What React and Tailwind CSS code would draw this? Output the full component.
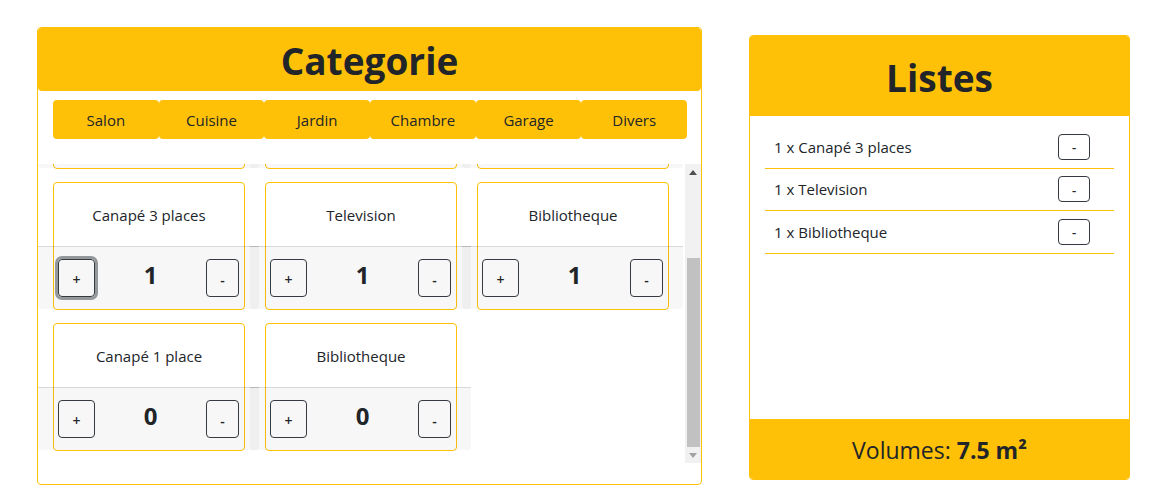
import React, { useLayoutEffect, useRef } from "react";

const rows = [
  [
    { name: "Table basse", qty: 0 },
    { name: "Fauteuil", qty: 0 },
    { name: "Meuble TV", qty: 0 },
  ],
  [
    { name: "Canapé 3 places", qty: 1, focus: true },
    { name: "Television", qty: 1 },
    { name: "Bibliotheque", qty: 1 },
  ],
  [
    { name: "Canapé 1 place", qty: 0 },
    { name: "Bibliotheque", qty: 0 },
  ],
];

const tabs = ["Salon", "Cuisine", "Jardin", "Chambre", "Garage", "Divers"];
const list = ["1 x Canapé 3 places", "1 x Television", "1 x Bibliotheque"];

function Card({ item }) {
  return (
    <div className="ml-[15px] w-[192px] h-[128px] border border-[#ffc107] rounded-[4px] flex flex-col">
      <div className="h-[64px] flex items-center justify-center pt-[1px] text-[15px] text-[#212529]">
        {item.name}
      </div>
      <div className="-ml-[16px] -mr-[15px] h-[63px] border-t border-black/[0.125] bg-black/[0.03] rounded-b-[3px] px-[20px] pt-[12px] flex justify-between items-start">
        <button
          className={
            "w-[37px] h-[38px] border border-[#343a40] rounded-[4px] text-[14px] font-semibold text-[#212529] flex items-center justify-center pt-[3px] " +
            (item.focus ? "shadow-[0_0_0_3px_rgba(52,58,64,0.5)]" : "")
          }
        >
          +
        </button>
        <div className="text-[24px] font-bold leading-[29px] pt-[1px] text-[#212529]">{item.qty}</div>
        <button className="w-[33px] h-[38px] border border-[#343a40] rounded-[4px] text-[14px] font-semibold text-[#212529] flex items-center justify-center pt-[3px]">
          -
        </button>
      </div>
    </div>
  );
}

function FakeScrollbar() {
  return (
    <div className="absolute top-0 right-0 w-[16px] h-full bg-[#f1f1f1] flex flex-col items-center">
      <div className="h-[17px] w-full flex items-center justify-center">
        <svg width="8" height="5" viewBox="0 0 8 5">
          <path d="M0 5 L4 0 L8 5 Z" fill="#505050" />
        </svg>
      </div>
      <div className="mt-[77px] w-[13px] h-[189px] bg-[#c1c1c1]" />
      <div className="flex-1 w-full flex items-center justify-center">
        <svg width="8" height="5" viewBox="0 0 8 5">
          <path d="M0 0 L8 0 L4 5 Z" fill="#a3a3a3" />
        </svg>
      </div>
    </div>
  );
}

export default function App() {
  const scrollRef = useRef(null);
  useLayoutEffect(() => {
    if (scrollRef.current) scrollRef.current.scrollTop = 123;
  }, []);

  return (
    <div
      className="w-[1166px] h-[504px] bg-white flex items-start pt-[27px] pl-[37px] gap-[47px] text-[#212529]"
      style={{ fontFamily: '"Open Sans", "Noto Sans", sans-serif' }}
    >
      <div className="w-[665px] h-[458px] border border-[#ffc107] rounded-[4px] flex flex-col">
        <h1 className="h-[63px] bg-[#ffc107] rounded-[4px] flex items-center justify-center pt-[3px] text-[37px] leading-[44px] font-bold text-[#212529]">
          Categorie
        </h1>
        <div className="mt-[9px] pl-[15px] pr-[14px] flex">
          {tabs.map((t) => (
            <button
              key={t}
              className="flex-1 h-[39px] bg-[#ffc107] rounded-[4px] text-[15px] text-[#212529] flex items-center justify-center pt-[1px]"
            >
              {t}
            </button>
          ))}
        </div>
        <div className="relative mt-[25px] h-[299px]">
          <div ref={scrollRef} className="h-full overflow-y-scroll">
            <div className="flex flex-col gap-[13px] pb-[13px]">
              {rows.map((r, i) => (
                <div key={i} className="grid grid-cols-[212px_212px_212px]">
                  {r.map((item, j) => (
                    <Card key={j} item={item} />
                  ))}
                </div>
              ))}
            </div>
          </div>
          <FakeScrollbar />
        </div>
      </div>

      <div className="mt-[8px] w-[381px] h-[445px] border border-[#ffc107] rounded-[4px] flex flex-col overflow-hidden">
        <div className="h-[80px] bg-[#ffc107] flex items-center justify-center pt-[4px] text-[37px] leading-[44px] font-bold text-[#212529]">
          Listes
        </div>
        <div className="flex-1 px-[15px] pt-[10px]">
          {list.map((l) => (
            <div
              key={l}
              className="h-[42.5px] border-b border-[#ffc107] pl-[9px] pr-[24px] flex items-center justify-between text-[15px]"
            >
              <span>{l}</span>
              <button className="w-[32px] h-[26px] border border-[#343a40] rounded-[4px] text-[13px] font-semibold flex items-center justify-center pt-[2px]">
                -
              </button>
            </div>
          ))}
        </div>
        <div className="h-[60px] bg-[#ffc107] flex items-center justify-center text-[23px] pt-[3px]">
          <span>
            Volumes: <b className="font-bold">7.5 m²</b>
          </span>
        </div>
      </div>
    </div>
  );
}
